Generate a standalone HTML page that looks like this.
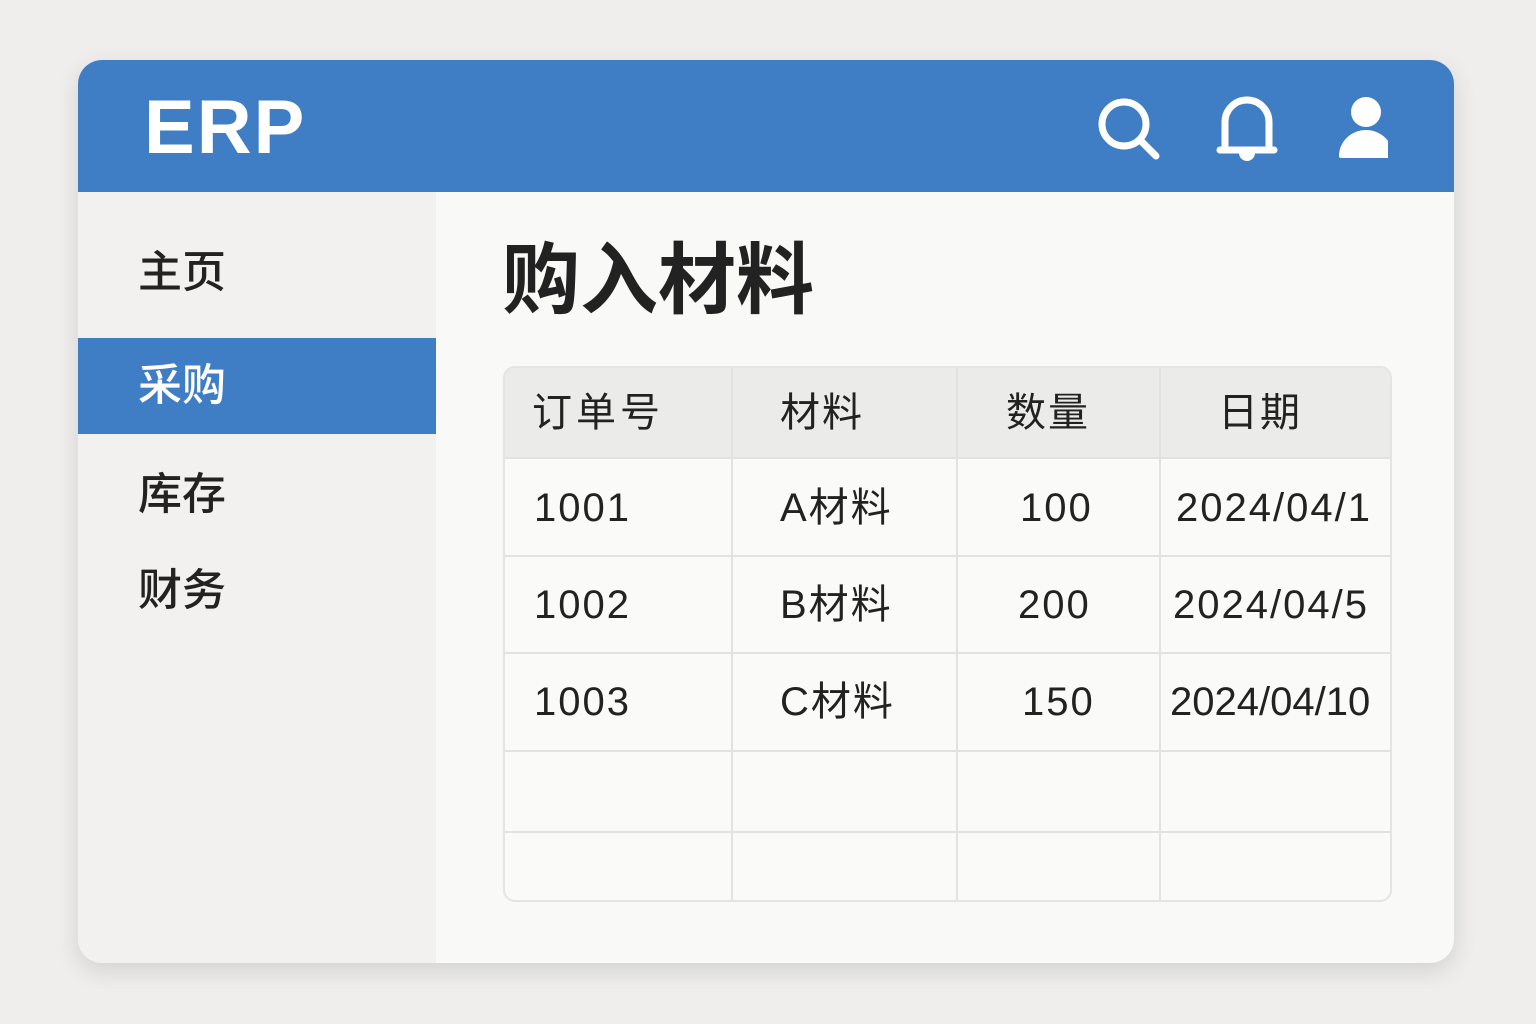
<!DOCTYPE html>
<html><head><meta charset="utf-8"><style>
*{margin:0;padding:0;box-sizing:border-box}
body{width:1536px;height:1024px;background:#efeeec;font-family:"Liberation Sans","Noto Sans CJK SC",sans-serif;position:relative;overflow:hidden;color:#222}
.card{position:absolute;left:78px;top:60px;width:1376px;height:903px;border-radius:24px;overflow:hidden;background:#f9f9f8;box-shadow:0 8px 24px rgba(0,0,0,.12)}
.hdr{position:absolute;left:0;top:0;width:100%;height:132px;background:#3f7ec5}
.erp{position:absolute;left:66px;top:28px;font-size:76px;font-weight:bold;color:#fff;letter-spacing:2px;line-height:80px}
.side{position:absolute;left:0;top:132px;width:358px;height:771px;background:#f2f1ef}
.it{position:absolute;left:60px;font-size:44px;line-height:50px;color:#222;font-weight:500}
.act{position:absolute;left:0;top:146px;width:358px;height:96px;background:#3f7ec5}
.title{position:absolute;left:424px;top:172px;font-size:78px;font-weight:bold;line-height:96px;color:#222}
.c{position:absolute;font-size:40px;line-height:50px;text-align:center;letter-spacing:2px}
.t{position:absolute;left:425px;top:306px;width:889px;height:536px;border:2px solid #e4e4e2;border-radius:12px;overflow:hidden;background:#fafaf9}
</style></head><body>
<div class="card">
<div class="hdr"></div>
<div class="erp">ERP</div>
<svg style="position:absolute;left:1010px;top:30px" width="300" height="80" viewBox="0 0 300 80">
<g fill="none" stroke="#fff" stroke-width="7" stroke-linecap="round">
<circle cx="36" cy="34" r="22"/><line x1="52" y1="50" x2="68" y2="66"/>
<path d="M137 59V32a22 22 0 0 1 44 0V59"/><line x1="132" y1="60" x2="186" y2="60"/>
</g>
<path d="M151 63h16a8 8 0 0 1-16 0z" fill="#fff"/>
<circle cx="278" cy="22" r="15" fill="#fff"/>
<path d="M251 66a27 26 0 0 1 54 0a2 2 0 0 1-2 2h-50a2 2 0 0 1-2-2z" fill="#fff"/>
</svg>
<div class="side">
<div class="it" style="top:56px">主页</div>
<div class="act"></div>
<div class="it" style="top:169px;color:#fff">采购</div>
<div class="it" style="top:278px">库存</div>
<div class="it" style="top:374px">财务</div>
</div>
<div class="title">购入材料</div>
<div class="t">
<svg style="position:absolute;left:-2px;top:-2px" width="889" height="536">
<rect x="0" y="0" width="889" height="92" fill="#ebebe9"/>
<g stroke="#e2e2e0" stroke-width="2">
<line x1="229" y1="0" x2="229" y2="536"/><line x1="454" y1="0" x2="454" y2="536"/><line x1="657" y1="0" x2="657" y2="536"/>
<line x1="0" y1="92" x2="889" y2="92"/><line x1="0" y1="190" x2="889" y2="190"/><line x1="0" y1="287" x2="889" y2="287"/><line x1="0" y1="385" x2="889" y2="385"/><line x1="0" y1="466" x2="889" y2="466"/>
</g></svg>
</div>
<div class="c" style="left:454px;top:328px;letter-spacing:4px">订单号</div>
<div class="c" style="left:702px;top:328px">材料</div>
<div class="c" style="left:928px;top:328px">数量</div>
<div class="c" style="left:1140px;top:328px">日期</div>
<div class="c" style="left:456px;top:423px">1001</div>
<div class="c" style="left:702px;top:423px">A材料</div>
<div class="c" style="left:942px;top:423px">100</div>
<div class="c" style="left:1098px;top:423px">2024/04/1</div>
<div class="c" style="left:456px;top:520px">1002</div>
<div class="c" style="left:702px;top:520px">B材料</div>
<div class="c" style="left:940px;top:520px">200</div>
<div class="c" style="left:1095px;top:520px">2024/04/5</div>
<div class="c" style="left:456px;top:617px">1003</div>
<div class="c" style="left:702px;top:617px">C材料</div>
<div class="c" style="left:944px;top:617px">150</div>
<div class="c" style="left:1092px;top:617px;letter-spacing:0">2024/04/10</div>
</div>
</body></html>
